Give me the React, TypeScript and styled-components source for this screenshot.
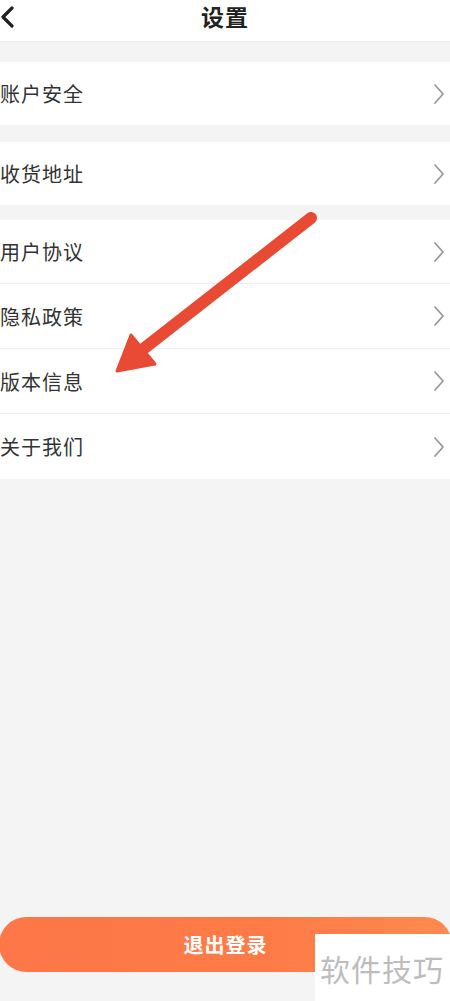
import React from "react";
import styled, { createGlobalStyle } from "styled-components";

const GlobalStyle = createGlobalStyle`
  html, body {
    margin: 0;
    padding: 0;
    background: #f4f4f4;
  }
  body {
    font-family: "Noto Sans CJK SC", "Noto Sans", sans-serif;
  }
`;

const Page = styled.div`
  position: relative;
  width: 450px;
  height: 1001px;
  display: flex;
  flex-direction: column;
  background: #f4f4f4;
  overflow: hidden;
`;

const Header = styled.div`
  height: 41px;
  box-sizing: content-box;
  background: #fff;
  border-bottom: 1px solid #ececec;
  display: flex;
  align-items: flex-start;
  justify-content: center;
  padding-top: 0;
  position: relative;
`;

const BackBtn = styled.div`
  position: absolute;
  left: 0;
  top: 6px;
  width: 18px;
  height: 22px;
`;

const Title = styled.h1`
  margin: 4px 0 0;
  font-size: 23px;
  line-height: 24px;
  font-weight: 700;
  color: #222;
  letter-spacing: 1px;
`;

const Group = styled.div<{ $gap: number }>`
  margin-top: ${(p) => p.$gap}px;
  background: #fff;
  display: flex;
  flex-direction: column;
`;

const Row = styled.div<{ $h: number; $line?: boolean }>`
  height: ${(p) => p.$h}px;
  display: flex;
  align-items: center;
  justify-content: space-between;
  padding-right: 4px;
  border-bottom: ${(p) => (p.$line ? "1px solid #ececec" : "none")};
  box-sizing: border-box;
`;

const Label = styled.span`
  font-size: 20px;
  color: #333;
  letter-spacing: 1px;
`;

const Spacer = styled.div`
  flex: 1;
`;

const LogoutBtn = styled.button`
  height: 55px;
  margin: 0 -2px 29px -1px;
  border: none;
  border-radius: 28px;
  background: linear-gradient(90deg, #fd7748 0%, #fe7b47 60%, #fe8a4f 100%);
  color: #fff;
  font-family: "Noto Sans CJK SC", sans-serif;
  font-size: 20px;
  font-weight: 700;
  letter-spacing: 1px;
  padding-bottom: 2px;
`;

const Watermark = styled.div`
  position: absolute;
  left: 315px;
  top: 934px;
  width: 135px;
  height: 67px;
  background: #fff;
  color: #bdbdbd;
  font-size: 30px;
  display: flex;
  align-items: center;
  padding-left: 5px;
  box-sizing: border-box;
  letter-spacing: 1px;
`;

const ArrowOverlay = styled.svg`
  position: absolute;
  left: 0;
  top: 0;
  pointer-events: none;
`;

const Chevron = () => (
  <svg width="14" height="22" viewBox="0 0 14 22">
    <path d="M3 2 L11 11 L3 20" fill="none" stroke="#999" strokeWidth="1.8" strokeLinecap="round" strokeLinejoin="round" />
  </svg>
);

const groups = [
  { gap: 20, items: [{ label: "账户安全", h: 63 }] },
  { gap: 17, items: [{ label: "收货地址", h: 63 }] },
  {
    gap: 15,
    items: [
      { label: "用户协议", h: 64 },
      { label: "隐私政策", h: 65 },
      { label: "版本信息", h: 65 },
      { label: "关于我们", h: 65 },
    ],
  },
];

export default function App() {
  return (
    <Page>
      <GlobalStyle />
      <Header>
        <BackBtn>
          <svg width="18" height="22" viewBox="0 0 18 22">
            <path d="M12 2 L3 11 L12 20" fill="none" stroke="#222" strokeWidth="3.2" strokeLinecap="round" strokeLinejoin="round" />
          </svg>
        </BackBtn>
        <Title>设置</Title>
      </Header>

      {groups.map((g, gi) => (
        <Group key={gi} $gap={g.gap}>
          {g.items.map((it, i) => (
            <Row key={it.label} $h={it.h} $line={i < g.items.length - 1}>
              <Label>{it.label}</Label>
              <Chevron />
            </Row>
          ))}
        </Group>
      ))}

      <Spacer />
      <LogoutBtn>退出登录</LogoutBtn>

      <ArrowOverlay width="450" height="1001" viewBox="0 0 450 1001">
        <line x1="311" y1="218" x2="142" y2="350" stroke="#e84a34" strokeWidth="12" strokeLinecap="round" />
        <polygon points="117,371 131,335 155,364" fill="#e84a34" stroke="#e84a34" strokeWidth="3" strokeLinejoin="round" />
      </ArrowOverlay>

      <Watermark>软件技巧</Watermark>
    </Page>
  );
}
